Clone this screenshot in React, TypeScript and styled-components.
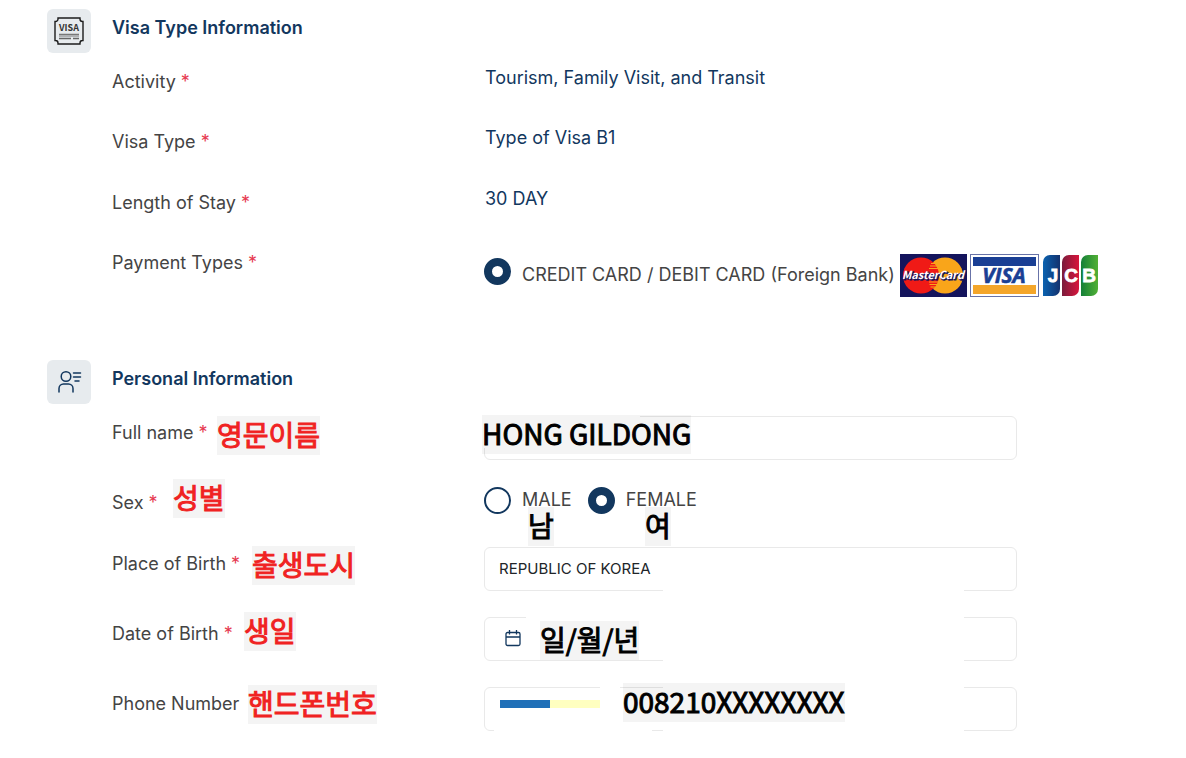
import React from "react";
import styled, { createGlobalStyle } from "styled-components";

const navy = "#12375e";
const ink = "#444444";

const GlobalStyle = createGlobalStyle`
  *, *::before, *::after { box-sizing: border-box; }
  body {
    margin: 0;
    background: #fff;
    color: ${ink};
    font-family: Inter, "Noto Sans CJK KR", sans-serif;
    font-size: 18px;
    line-height: 24px;
  }
`;

const Page = styled.main`
  padding: 9px 46px 27px 47px;
`;

const Section = styled.section`
  display: grid;
  grid-template-columns: 65px minmax(0, 1fr);
`;

const IconTile = styled.div`
  width: 44px;
  height: 44px;
  border-radius: 6px;
  background: #e7ebee;
  display: flex;
  align-items: center;
  justify-content: center;
`;

const Title = styled.h2`
  margin: 0;
  padding: 7px 0 25px;
  font-size: 18px;
  line-height: 24px;
  font-weight: 600;
  color: ${navy};
`;

const Row = styled.div<{ $height: number }>`
  position: relative;
  display: grid;
  grid-template-columns: 372px minmax(0, 1fr);
  align-items: start;
  min-height: ${(p) => p.$height}px;
`;

const Label = styled.label`
  padding-top: 5px;
`;

const Star = styled.span`
  color: #e63950;
`;

const Value = styled.output`
  padding: 1px;
  color: ${navy};
`;

const Payment = styled.div`
  display: flex;
  padding-top: 8px;
  line-height: 42px;
  white-space: nowrap;
`;

const Cards = styled.div`
  display: flex;
  gap: 3px;
  margin-left: 5px;
`;

const Radio = styled.input.attrs({ type: "radio" })`
  appearance: none;
  flex: none;
  width: 27px;
  height: 27px;
  margin: 0 11px 0 0;
  border: 2px solid ${navy};
  border-radius: 50%;
  background: #fff;
  &:checked { border-width: 8px; }
`;

const PaymentRadio = styled(Radio)`
  margin-top: 4px;
`;

const RadioGroup = styled.div`
  display: flex;
  gap: 16px;
`;

const Option = styled.label`
  display: flex;
  align-items: center;
  height: 28px;
`;

const Field = styled.div`
  position: relative;
  max-width: 533px;
`;

const Input = styled.input`
  display: block;
  width: 100%;
  height: 44px;
  padding: 0 14px 2px;
  border: 1px solid #e9e9e9;
  border-radius: 6px;
  background: #fff;
  color: #212529;
  font-family: Inter, sans-serif;
  font-size: 15px;
  outline: none;
`;

type Box = { $x: number; $y: number; $w: number; $h: number };

const Cover = styled.span<Box>`
  position: absolute;
  left: ${(p) => p.$x}px;
  top: ${(p) => p.$y}px;
  width: ${(p) => p.$w}px;
  height: ${(p) => p.$h}px;
  background: #fff;
  pointer-events: none;
`;

const Note = styled.span<{ $x: number; $y: number; $red?: boolean }>`
  position: absolute;
  left: ${(p) => p.$x}px;
  top: ${(p) => p.$y}px;
  padding-bottom: 2px;
  background: rgba(0, 0, 0, 0.043);
  color: ${(p) => (p.$red ? "#f02222" : "#000")};
  -webkit-text-stroke: 1px currentColor;
  font-family: "Noto Sans CJK KR", sans-serif;
  font-size: 28px;
  line-height: 37px;
  font-weight: 400;
  white-space: nowrap;
`;

const CalendarIcon = styled.svg`
  position: absolute;
  left: 21px;
  top: 13px;
`;

const Flag = styled.span`
  position: absolute;
  left: 16px;
  top: 13px;
  width: 100px;
  height: 8px;
  background: linear-gradient(90deg, #2070b8 50%, #ffffc0 50%);
`;

const Required = () => <Star> *</Star>;

const VisaIcon = () => (
  <svg width="30" height="28" viewBox="0 0 30 28" fill="none" aria-hidden="true">
    <path d="M4 1h22v1a2.500 2.500 0 0 0 2.500 2.500h.5v19h-.5a2.500 2.500 0 0 0-2.500 2.500v1H4v-1a2.500 2.500 0 0 0-2.500-2.500H1v-19h.5A2.500 2.500 0 0 0 4 2z" stroke="#1c1c1c" strokeWidth="1.400" />
    <text x="15" y="14" textAnchor="middle" fontFamily="Noto Sans CJK KR, sans-serif" fontSize="9" fontWeight="700" fill="#333">VISA</text>
    <path d="M5 17.300h20M5 19h20" stroke="#777" strokeWidth="1.200" />
    <path d="M5 21.500h12M19 21.500h6" stroke="#666" strokeWidth="1.600" />
  </svg>
);

const PersonIcon = () => (
  <svg width="26" height="26" viewBox="0 0 26 26" fill="none" stroke={navy} strokeWidth="1.500" strokeLinecap="round" aria-hidden="true">
    <circle cx="10" cy="7.500" r="4.800" />
    <path d="M3 23v-3.500a4.500 4.500 0 0 1 4.500-4.500h5a4.500 4.500 0 0 1 4.500 4.500V23M17.500 4h7M17.500 8h7M19 12h4" />
  </svg>
);

const MasterCard = () => (
  <svg width="67" height="43" viewBox="0 0 67 43" role="img" aria-label="MasterCard">
    <rect width="67" height="43" fill="#14145c" />
    <circle cx="45" cy="21.500" r="18" fill="#f9a51a" />
    <circle cx="21" cy="21.500" r="18" fill="#f01a16" />
    <path d="M31 9.500h5M30 12h8M29 14.500h10M29 28h10M29.500 30.500h8M30.500 33h5" stroke="#f9a51a" strokeWidth="1.200" />
    <g fontFamily="Noto Sans CJK KR, sans-serif" fontSize="11" fontWeight="700" fontStyle="italic" textAnchor="middle">
      <text x="34" y="26" fill="#14145c" stroke="#14145c" strokeWidth="1" aria-hidden="true">MasterCard</text>
      <text x="33" y="25" fill="#fff">MasterCard</text>
    </g>
  </svg>
);

const VisaCard = () => (
  <svg width="69" height="43" viewBox="0 0 69 43" role="img" aria-label="Visa">
    <rect x=".5" y=".5" width="68" height="42" fill="#fff" stroke="#6873a8" />
    <rect x="3" y="3" width="63" height="9" fill="#1a3f94" />
    <rect x="3" y="31" width="63" height="9" fill="#f4a62a" />
    <text x="34" y="29" textAnchor="middle" fontFamily="Open Sans, sans-serif" fontSize="21" fontWeight="700" fontStyle="italic" fill="#1a3f94" stroke="#1a3f94" strokeWidth=".6">VISA</text>
  </svg>
);

const JcbCard = () => (
  <svg width="57" height="43" viewBox="0 0 57 43" role="img" aria-label="JCB">
    <defs>
      <linearGradient id="jcb-blue"><stop stopColor="#0a62b0" /><stop offset="1" stopColor="#14326e" /></linearGradient>
      <linearGradient id="jcb-red"><stop stopColor="#7a1c3c" /><stop offset="1" stopColor="#d8153c" /></linearGradient>
      <linearGradient id="jcb-green"><stop stopColor="#148038" /><stop offset="1" stopColor="#52b035" /></linearGradient>
    </defs>
    <path d="M8 1h10v34a7 7 0 0 1-7 7H1V8a7 7 0 0 1 7-7z" fill="url(#jcb-blue)" />
    <path d="M27 1h10v34a7 7 0 0 1-7 7H20V8a7 7 0 0 1 7-7z" fill="url(#jcb-red)" />
    <path d="M46 1h10v34a7 7 0 0 1-7 7H39V8a7 7 0 0 1 7-7z" fill="url(#jcb-green)" />
    <g fontFamily="Liberation Sans, sans-serif" fontSize="19" fontWeight="700" fill="#fff" stroke="#fff" strokeWidth=".8" textAnchor="middle">
      <text x="11" y="28">J</text>
      <text x="29" y="28">C</text>
      <text x="47" y="28">B</text>
    </g>
  </svg>
);

const facts = [
  { id: "activity", label: "Activity", value: "Tourism, Family Visit, and Transit", height: 60 },
  { id: "visa-type", label: "Visa Type", value: "Type of Visa B1", height: 61 },
  { id: "stay", label: "Length of Stay", value: "30 DAY", height: 60 },
];

export default function App() {
  return (
    <>
      <GlobalStyle />
      <Page>
        <Section>
          <IconTile><VisaIcon /></IconTile>
          <div>
            <Title>Visa Type Information</Title>
            {facts.map((f) => (
              <Row key={f.id} $height={f.height}>
                <Label htmlFor={f.id}>{f.label}<Required /></Label>
                <Value id={f.id}>{f.value}</Value>
              </Row>
            ))}
            <Row $height={114}>
              <Label htmlFor="card">Payment Types<Required /></Label>
              <Payment>
                <PaymentRadio id="card" name="payment" defaultChecked />
                <label htmlFor="card">CREDIT CARD / DEBIT CARD (Foreign Bank)</label>
                <Cards><MasterCard /><VisaCard /><JcbCard /></Cards>
              </Payment>
            </Row>
          </div>
        </Section>

        <Section>
          <IconTile><PersonIcon /></IconTile>
          <div>
            <Title>Personal Information</Title>
            <Row $height={70}>
              <Label htmlFor="name">Full name<Required /></Label>
              <Note $x={105} $y={0} $red>영문이름</Note>
              <Field>
                <Input id="name" />
                <Cover $x={0} $y={0} $w={156} $h={32} />
                <Note $x={-2} $y={-1}>HONG GILDONG</Note>
              </Field>
            </Row>
            <Row $height={61}>
              <Label as="span" id="sex">Sex<Required /></Label>
              <Note $x={61} $y={-7} $red>성별</Note>
              <Field>
                <RadioGroup role="radiogroup" aria-labelledby="sex">
                  <Option><Radio name="sex" />MALE</Option>
                  <Option><Radio name="sex" defaultChecked />FEMALE</Option>
                </RadioGroup>
                <Note $x={44} $y={21}>남</Note>
                <Note $x={161} $y={21}>여</Note>
              </Field>
            </Row>
            <Row $height={70}>
              <Label htmlFor="birthplace">Place of Birth<Required /></Label>
              <Note $x={140} $y={-1} $red>출생도시</Note>
              <Field>
                <Input id="birthplace" defaultValue="REPUBLIC OF KOREA" />
                <Cover $x={179} $y={40} $w={301} $h={4} />
              </Field>
            </Row>
            <Row $height={70}>
              <Label htmlFor="birthday">Date of Birth<Required /></Label>
              <Note $x={132} $y={-5} $red>생일</Note>
              <Field>
                <Input id="birthday" />
                <Cover $x={42} $y={0} $w={438} $h={4} />
                <Cover $x={179} $y={40} $w={301} $h={4} />
                <CalendarIcon width="16" height="17" viewBox="0 0 16 17" fill="none" stroke={navy} strokeWidth="1.300" aria-hidden="true">
                  <rect x="1" y="2.500" width="14" height="13" rx="1.500" />
                  <path d="M1 7h14M4.500 0v4.500M11.500 0v4.500" />
                </CalendarIcon>
                <Note $x={56} $y={4}>일/월/년</Note>
              </Field>
            </Row>
            <Row $height={44}>
              <Label htmlFor="phone">Phone Number</Label>
              <Note $x={136} $y={-2} $red>핸드폰번호</Note>
              <Field>
                <Input id="phone" type="tel" />
                <Cover $x={116} $y={0} $w={20} $h={4} />
                <Cover $x={179} $y={0} $w={301} $h={4} />
                <Cover $x={10} $y={40} $w={158} $h={4} />
                <Cover $x={179} $y={40} $w={301} $h={4} />
                <Flag />
                <Note $x={139} $y={-4}>008210XXXXXXXX</Note>
              </Field>
            </Row>
          </div>
        </Section>
      </Page>
    </>
  );
}
